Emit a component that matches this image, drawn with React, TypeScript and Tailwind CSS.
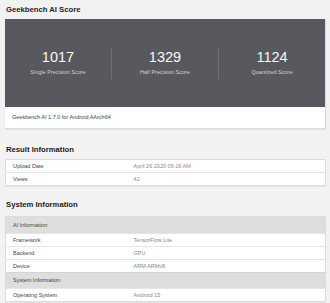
import React from 'react';

const scores = [
  { value: '1017', label: 'Single Precision Score' },
  { value: '1329', label: 'Half Precision Score' },
  { value: '1124', label: 'Quantized Score' },
];

const resultRows = [
  { name: 'Upload Date', value: 'April 26 2020 09:16 AM' },
  { name: 'Views', value: '42' },
];

type Row = { name: string; value?: string; header?: boolean };

const systemRows: Row[] = [
  { name: 'AI Information', header: true },
  { name: 'Framework', value: 'TensorFlow Lite' },
  { name: 'Backend', value: 'GPU' },
  { name: 'Device', value: 'ARM ARMv8' },
  { name: 'System Information', header: true },
  { name: 'Operating System', value: 'Android 15' },
];

const InfoTable: React.FC<{ rows: Row[] }> = ({ rows }) => (
  <div className="ml-[5px] mr-[4px] bg-white border border-[#dcdcdc] rounded-[1px] shadow-[0_1px_1px_rgba(0,0,0,0.06)]">
    {rows.map((row, i) =>
      row.header ? (
        <div
          key={row.name}
          className={`h-[16px] flex items-center pl-[7px] bg-[#dedede] text-[#444] ${i > 0 ? 'border-t border-[#d4d4d4]' : ''}`}
        >
          {row.name}
        </div>
      ) : (
        <div key={row.name} className={`h-[12px] flex items-center ${i > 0 ? 'border-t border-[#e6e6e6] box-content' : ''}`}>
          <div className="w-[40%] pl-[7px] text-[#444]">{row.name}</div>
          <div className="flex-1 text-[#888]">{row.value}</div>
        </div>
      )
    )}
  </div>
);

export default function App() {
  return (
    <div className="w-[330px] h-[303px] overflow-hidden bg-[#f2f2f2] font-['Liberation_Sans',Arial,sans-serif] text-[5.5px] leading-[7px]">
      <div className="h-[19px] pt-[5px] pl-[6px]">
        <h2 className="text-[7.7px] leading-[10px] font-bold text-[#222]">Geekbench AI Score</h2>
      </div>

      <div className="ml-[5px] mr-[4px] bg-white border-r border-b border-[#dcdcdc] shadow-[0_1px_1px_rgba(0,0,0,0.06)]">
        <div className="h-[88px] bg-[#58595e] flex items-center">
          {scores.map((s, i) => (
            <div
              key={s.label}
              className={`flex-1 h-[31px] pt-[1px] flex flex-col items-center ${i > 0 ? 'border-l border-[#707176]' : ''}`}
            >
              <div className="text-[14.5px] leading-[16px] text-[#f7f7f7]">{s.value}</div>
              <div className="mt-[4px] text-[#cfcfd2]">{s.label}</div>
            </div>
          ))}
        </div>
        <div className="h-[21px] flex items-center pl-[7px] text-[#444]">
          Geekbench AI 1.7.0 for Android AArch64
        </div>
      </div>

      <div className="h-[30px] pt-[16px] pl-[6px]">
        <h2 className="text-[7.7px] leading-[10px] font-bold text-[#222]">Result Information</h2>
      </div>
      <InfoTable rows={resultRows} />

      <div className="h-[30px] pt-[14px] pl-[6px]">
        <h2 className="text-[7.7px] leading-[10px] font-bold text-[#222]">System Information</h2>
      </div>
      <InfoTable rows={systemRows} />
    </div>
  );
}
